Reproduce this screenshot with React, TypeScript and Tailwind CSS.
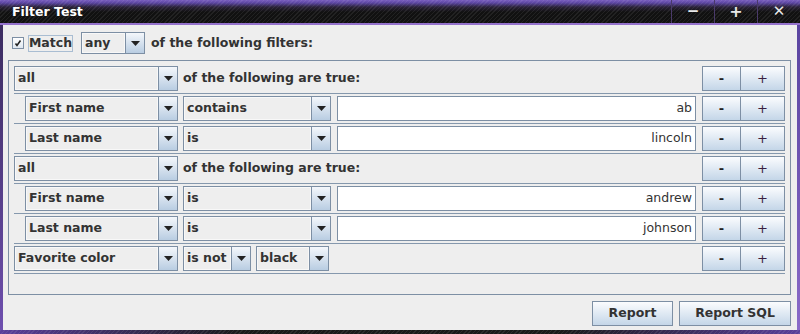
import React from 'react'

// small down triangle used in every combo's arrow button
function Arrow() {
  return (
    <svg width="9" height="5" viewBox="0 0 9 5">
      <path d="M0 0h9L4.5 5z" fill="#222" />
    </svg>
  )
}

function Combo({ w, h = 'h-[25px]', text }: { w: string; h?: string; text: string }) {
  return (
    <div className={`flex shrink-0 border border-[#7d8fa4] bg-[#eeeeee] ${w} ${h}`}>
      <div className="flex flex-1 items-center border border-[#f8f8f8] pl-[2px] text-[12.5px] font-bold text-[#333]">
        {text}
      </div>
      <div className="flex w-[19px] items-center justify-center border-l border-[#7d8fa4] bg-gradient-to-b from-[#f4f7fb] to-[#b9cde2]">
        <Arrow />
      </div>
    </div>
  )
}

function PlusMinus() {
  return (
    <div className="ml-auto flex h-[25px] shrink-0 border border-[#7d8fa4]">
      <button className="flex w-[38px] items-center justify-center border-r border-[#7d8fa4] bg-gradient-to-b from-[#fbfcfe] to-[#c4d6e8] text-[13px] font-bold text-[#222]">
        -
      </button>
      <button className="flex w-[43px] items-center justify-center bg-gradient-to-b from-[#fbfcfe] to-[#c4d6e8] text-[13px] text-[#3a1f3f]">
        +
      </button>
    </div>
  )
}

function Field({ value }: { value: string }) {
  return (
    <div className="mx-[6px] flex h-[25px] flex-1 items-center justify-end border border-[#7d8fa4] bg-white pr-[3px] text-[12.5px] text-[#333]">
      {value}
    </div>
  )
}

function Sep() {
  return <div className="mt-[2px] mb-[2px] h-px bg-[#8598ad]" />
}

function GroupRow() {
  return (
    <>
      <div className="flex h-[25px] items-center">
        <Combo w="w-[164px]" text="all" />
        <span className="ml-[5px] text-[12.5px] font-bold text-[#333]">of the following are true:</span>
        <PlusMinus />
      </div>
      <Sep />
    </>
  )
}

function CondRow({ field, op, value }: { field: string; op: string; value: string }) {
  return (
    <>
      <div className="flex h-[25px] items-center pl-[11px]">
        <Combo w="w-[153px]" text={field} />
        <div className="ml-[5px]">
          <Combo w="w-[148px]" text={op} />
        </div>
        <Field value={value} />
        <PlusMinus />
      </div>
      <Sep />
    </>
  )
}

export default function App() {
  return (
    <div className="flex h-[334px] w-[800px] flex-col bg-[#1a1a1a] font-['DejaVu_Sans',sans-serif]">
      {/* title bar */}
      <div className="relative flex h-[23px] items-center bg-[repeating-linear-gradient(135deg,rgba(255,255,255,0.07)_0px,rgba(255,255,255,0.07)_1px,transparent_1px,transparent_3px),linear-gradient(to_bottom,#7a5fbf_0px,#5a44a0_3px,#2a2238_7px,#111_12px)]">
        <span className="pl-[12px] pt-[2px] text-[12.5px] font-bold text-white">Filter Test</span>
        <div className="ml-auto flex h-full">
          <div className="flex w-[43px] items-center justify-center border-l border-[#4a3a6a] text-[15px] font-bold text-[#e8e8e8]">−</div>
          <div className="flex w-[43px] items-center justify-center border-l border-[#4a3a6a] text-[16px] font-bold text-[#e8e8e8]">+</div>
          <div className="flex w-[43px] items-center justify-center border-l border-[#4a3a6a] text-[15px] font-bold text-[#e8e8e8]">✕</div>
        </div>
      </div>
      <div className="h-[2px] bg-[#9472cc]" />

      <div className="flex flex-1">
        <div className="w-[3px] bg-gradient-to-b from-[#3c2c60] to-[#6e4fae]" />
        <div className="flex flex-1 flex-col bg-[#eeeeee]">
          {/* match row */}
          <div className="mt-[7px] flex h-[22px] items-center pl-[9px]">
            <div className="flex h-[12px] w-[12px] items-center justify-center border border-[#7d8fa4] bg-gradient-to-b from-white to-[#dfe7f0]">
              <svg width="8" height="8" viewBox="0 0 8 8">
                <path d="M1.5 4.5L3 6.5L6.5 1.5" stroke="#222" strokeWidth="1.6" fill="none" />
              </svg>
            </div>
            <div className="ml-[4px] flex h-[17px] w-[45px] items-center justify-center border border-[#a9bdd2] text-[12.5px] font-bold text-[#333]">
              Match
            </div>
            <div className="ml-[8px]">
              <Combo w="w-[64px]" h="h-[22px]" text="any" />
            </div>
            <span className="ml-[6px] text-[12.5px] font-bold text-[#333]">of the following filters:</span>
          </div>

          {/* filter tree */}
          <div className="mt-[6px] ml-[5px] h-[235px] w-[783px] border border-[#7d8fa4] px-[5px] pt-[5px]">
            <GroupRow />
            <CondRow field="First name" op="contains" value="ab" />
            <CondRow field="Last name" op="is" value="lincoln" />
            <GroupRow />
            <CondRow field="First name" op="is" value="andrew" />
            <CondRow field="Last name" op="is" value="johnson" />
            <div className="flex h-[25px] items-center">
              <Combo w="w-[164px]" text="Favorite color" />
              <div className="ml-[5px]">
                <Combo w="w-[68px]" text="is not" />
              </div>
              <div className="ml-[5px]">
                <Combo w="w-[73px]" text="black" />
              </div>
              <PlusMinus />
            </div>
            <Sep />
          </div>

          {/* bottom buttons */}
          <div className="mt-[6px] flex justify-end gap-[6px] pr-[6px]">
            <button className="h-[25px] w-[81px] border border-[#7d8fa4] bg-gradient-to-b from-[#fbfcfe] to-[#c4d6e8] text-[12.5px] font-bold text-[#333]">
              Report
            </button>
            <button className="h-[25px] w-[112px] border border-[#7d8fa4] bg-gradient-to-b from-[#fbfcfe] to-[#c4d6e8] text-[12.5px] font-bold text-[#333]">
              Report SQL
            </button>
          </div>
        </div>
        <div className="w-[3px] bg-gradient-to-b from-[#5a44a0] to-[#8a6ac8]" />
      </div>
      <div className="h-[4px] bg-[repeating-linear-gradient(135deg,rgba(255,255,255,0.08)_0px,rgba(255,255,255,0.08)_1px,transparent_1px,transparent_3px),linear-gradient(to_right,#5a3f9a,#1a1a1a_30%,#1a1a1a_70%,#5a3f9a)]" />
    </div>
  )
}
